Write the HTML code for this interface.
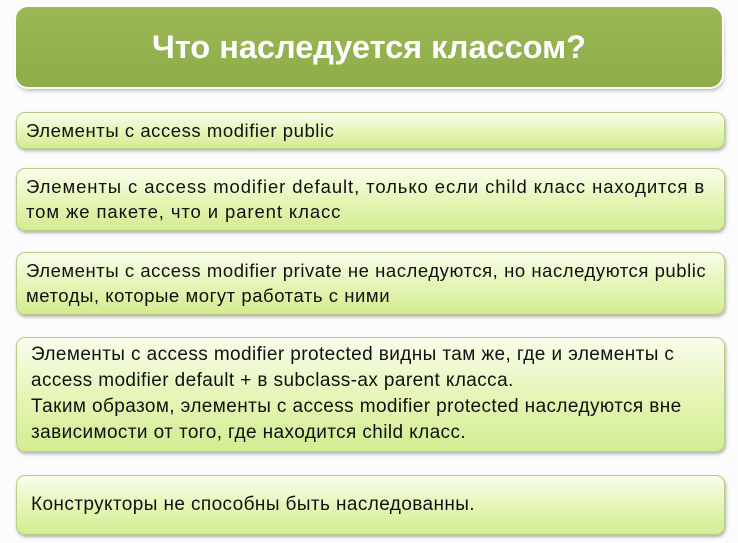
<!DOCTYPE html>
<html><head><meta charset="utf-8"><style>
body{margin:0;width:738px;height:543px;background:#fbfcfb;font-family:"Liberation Sans","DejaVu Sans",sans-serif;position:relative;overflow:hidden}
.h{position:absolute;left:16px;top:7px;width:706px;height:80px;border-radius:12px;background:linear-gradient(#9ab856,#8eae4a);box-shadow:0 0 0 2px #fff,1px 3px 5px rgba(0,0,0,.35);color:#fff;font-weight:bold;font-size:32.5px;text-align:center;line-height:80px}
.b{position:absolute;left:16px;width:709px;border:1px solid #b9cd86;border-radius:9px;background:linear-gradient(#f9fdeb,#e4f5b4 55%,#d3ec93);box-shadow:1px 2px 3px rgba(0,0,0,.3);color:#111;font-size:18.5px;letter-spacing:0.9px;line-height:25px;box-sizing:border-box;padding:0 9px;white-space:nowrap}
.b.l{font-size:19px;letter-spacing:0.4px;line-height:26px}
</style></head><body>
<div class="h">Что наследуется классом?</div>
<div class="b" style="top:112px;height:37px;padding-top:5px;letter-spacing:0.55px">Элементы с access modifier public</div>
<div class="b" style="top:168px;height:63px;padding-top:5px">Элементы с access modifier default, только если child класс находится в<br>том же пакете, что и parent класс</div>
<div class="b" style="top:252px;height:63px;padding-top:5px;letter-spacing:0.55px">Элементы с access modifier private не наследуются, но наследуются public<br>методы, которые могут работать с ними</div>
<div class="b l" style="top:337px;height:115px;padding:4px 14px">Элементы с access modifier protected видны там же, где и элементы с<br>access modifier default + в subclass-ах parent класса.<br>Таким образом, элементы с access modifier protected наследуются вне<br>зависимости от того, где находится child класс.</div>
<div class="b l" style="top:475px;height:60px;padding:16px 14px">Конструкторы не способны быть наследованны.</div>
</body></html>
